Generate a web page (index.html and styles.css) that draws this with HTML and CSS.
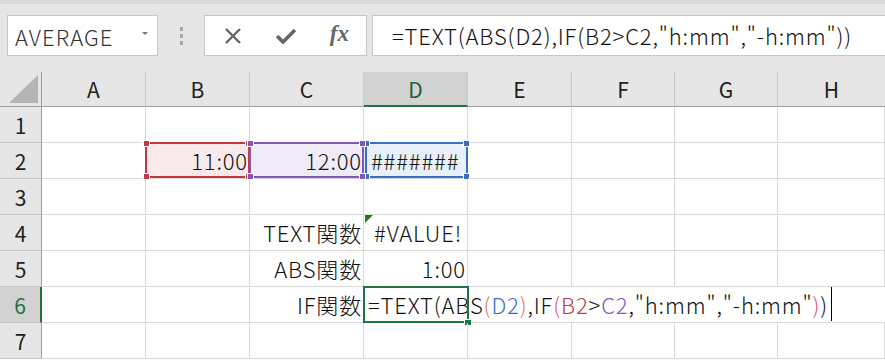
FILE: index.html
```html
<!DOCTYPE html>
<html lang="ja">
<head>
	<meta charset="UTF-8">
	<title>TEXT関数</title>
	<link rel="stylesheet" href="styles.css">
</head>
<body>
	<div class="toolbar">
		<div class="namebox">
			<span>AVERAGE</span>
			<span class="caret"></span>
		</div>
		<div class="grip"><i></i><i></i><i></i></div>
		<div class="btns">
			<svg width="18" height="16" viewBox="0 0 18 16"><path d="M2 1 L16 15 M16 1 L2 15" stroke="#666" stroke-width="2.4" fill="none"/></svg>
			<svg width="20" height="16" viewBox="0 0 20 16"><path d="M1 8 L7 14 L19 2" stroke="#666" stroke-width="3.6" fill="none"/></svg>
			<span class="fx">fx</span>
		</div>
		<div class="formula">=TEXT(ABS(D2),IF(B2&gt;C2,"h:mm","-h:mm"))</div>
	</div>

	<div class="sheet">
		<div class="hd corner"><svg width="29" height="28" viewBox="0 0 29 28"><path d="M29 0 L29 28 L0 28 Z" fill="#b4b4b4"/></svg></div>
		<div class="hd col">A</div>
		<div class="hd col">B</div>
		<div class="hd col">C</div>
		<div class="hd col sel">D</div>
		<div class="hd col">E</div>
		<div class="hd col">F</div>
		<div class="hd col">G</div>
		<div class="hd col last">H</div>

		<!-- 1 -->
		<div class="hd row">1</div>
		<div class="c"></div><div class="c"></div><div class="c"></div><div class="c"></div>
		<div class="c"></div><div class="c"></div><div class="c"></div><div class="c"></div>

		<!-- 2 -->
		<div class="hd row">2</div>
		<div class="c"></div>
		<div class="c r red-fill">11:00<div class="rng red"><i class="tl"></i><i class="tr"></i><i class="bl"></i><i class="br"></i></div></div>
		<div class="c r purple-fill">12:00<div class="rng purple"><i class="tl"></i><i class="tr"></i><i class="bl"></i><i class="br"></i></div></div>
		<div class="c blue-fill">#######<div class="rng blue"><i class="tl"></i><i class="tr"></i><i class="bl"></i><i class="br"></i></div></div>
		<div class="c"></div><div class="c"></div><div class="c"></div><div class="c"></div>

		<!-- 3 -->
		<div class="hd row">3</div>
		<div class="c"></div><div class="c"></div><div class="c"></div><div class="c"></div>
		<div class="c"></div><div class="c"></div><div class="c"></div><div class="c"></div>

		<!-- 4 -->
		<div class="hd row">4</div>
		<div class="c"></div><div class="c"></div>
		<div class="c r">TEXT関数</div>
		<div class="c ctr err">#VALUE!</div>
		<div class="c"></div><div class="c"></div><div class="c"></div><div class="c"></div>

		<!-- 5 -->
		<div class="hd row">5</div>
		<div class="c"></div><div class="c"></div>
		<div class="c r">ABS関数</div>
		<div class="c r">1:00</div>
		<div class="c"></div><div class="c"></div><div class="c"></div><div class="c"></div>

		<!-- 6 -->
		<div class="hd row sel">6</div>
		<div class="c"></div><div class="c"></div>
		<div class="c r">IF関数</div>
		<div class="c edit">=TEXT(ABS<span class="p1">(</span><span class="blue-t">D2</span><span class="p1">)</span>,IF<span class="p2">(</span><span class="red-t">B2</span>&gt;<span class="purple-t">C2</span>,"h:mm","-h:mm"<span class="p2">)</span>)<span class="cursor"></span><div class="active"></div></div>

		<!-- 7 -->
		<div class="hd row">7</div>
		<div class="c"></div><div class="c"></div><div class="c"></div><div class="c"></div>
		<div class="c"></div><div class="c"></div><div class="c"></div><div class="c"></div>
	</div>
</body>
</html>
```

FILE: styles.css
```css
* {
	padding: 0;
	margin: 0;
	box-sizing: border-box;
}
body {
	width: 885px;
	height: 360px;
	overflow: hidden;
	background: #fff;
	font-family: "Noto Sans CJK JP", "Noto Sans", sans-serif;
	font-weight: 300;
	color: #111;
}

/* formula bar */
.toolbar {
	height: 72px;
	background: #e6e6e6;
	border-top: 4px solid #d8d8d8;
	display: flex;
	align-items: flex-start;
	padding-top: 11px;
}
.namebox {
	margin-left: 7px;
	width: 151px;
	height: 41px;
	background: #fff;
	border: 1px solid #c6c6c6;
	display: flex;
	align-items: center;
	justify-content: space-between;
	padding: 0 9px 0 7px;
	font-size: 22px;
	letter-spacing: 1.1px;
	color: #333;
}
.caret {
	width: 0;
	height: 0;
	border-left: 3px solid transparent;
	border-right: 3px solid transparent;
	border-top: 3px solid #777;
	margin-bottom: 4px;
}
.grip {
	width: 46px;
	height: 41px;
	display: flex;
	flex-direction: column;
	align-items: center;
	justify-content: center;
	gap: 3px;
}
.grip i {
	display: block;
	width: 3px;
	height: 4px;
	background: #a8a8a8;
}
.btns {
	width: 163px;
	height: 41px;
	background: #fff;
	border: 1px solid #c6c6c6;
	display: flex;
	align-items: center;
	justify-content: space-between;
	padding: 0 17px 0 19px;
}
.fx {
	font-family: "Liberation Serif", serif;
	font-style: italic;
	font-weight: bold;
	font-size: 23px;
	color: #666;
	margin-top: -3px;
}
.formula {
	flex: 1;
	margin-left: 5px;
	height: 41px;
	background: #fff;
	border: 1px solid #c6c6c6;
	border-right: none;
	font-size: 22px;
	letter-spacing: 0.85px;
	line-height: 38px;
	padding-left: 19px;
	white-space: nowrap;
}

/* sheet grid */
.sheet {
	display: grid;
	grid-template-columns: 42px 104px 104px 114px 104px 104px 103px 103px 1fr;
	grid-template-rows: 35px repeat(7, 36px);
	font-size: 22px;
	letter-spacing: 0.85px;
}
.hd {
	background: #e6e6e6;
	color: #222;
	font-size: 21px;
	font-weight: 400;
	letter-spacing: 0;
	display: flex;
	align-items: center;
	justify-content: center;
}
.hd.col {
	border-right: 1px solid #c8c8c8;
	border-bottom: 1px solid #9e9e9e;
}
.hd.col.last {
	border-right: none;
}
.hd.corner {
	border-right: 1px solid #9e9e9e;
	border-bottom: 1px solid #9e9e9e;
	align-items: flex-end;
	justify-content: flex-end;
	padding: 0 3px 3px 0;
}
.hd.row {
	border-right: 1px solid #9e9e9e;
	border-bottom: 1px solid #c8c8c8;
}
.hd.col.sel {
	background: #d2d2d2;
	border-bottom: 2px solid #217346;
	color: #1d5e3c;
}
.hd.row.sel {
	background: #d2d2d2;
	border-right: 2px solid #217346;
	color: #217346;
}

.c {
	position: relative;
	border-right: 1px solid #d9d9d9;
	border-bottom: 1px solid #d9d9d9;
	line-height: 35px;
	padding: 0 3px;
	white-space: nowrap;
}
.c.r {
	text-align: right;
	padding-right: 1px;
}
.c.ctr {
	text-align: center;
	padding-left: 8px;
}
.err::before {
	content: "";
	position: absolute;
	left: 1px;
	top: 0;
	border-top: 8px solid #1e7b1e;
	border-right: 8px solid transparent;
}

.red-fill { background: #f8e9ea; }
.purple-fill { background: #efebf7; }
.blue-fill { background: #e9f0f9; padding-left: 7px; }

.rng {
	position: absolute;
	left: -1px;
	top: -1px;
	right: -1px;
	bottom: 0;
	border: 2px solid;
}
.rng.red { border-color: #c2393f; }
.rng.purple { border-color: #8157bb; z-index: 2; }
.rng.blue { border-color: #3a6ec6; left: 1px; }
.rng i {
	position: absolute;
	width: 7px;
	height: 7px;
	border: 1px solid #fff;
}
.rng.red i { background: #c2393f; }
.rng.purple i { background: #8157bb; }
.rng.blue i { background: #3a6ec6; }
.rng .tl { left: -4px; top: -4px; }
.rng .tr { right: -4px; top: -4px; }
.rng .bl { left: -4px; bottom: -4px; }
.rng .br { right: -4px; bottom: -4px; }

.edit {
	grid-column: 5 / -1;
	border-right: none;
	padding-left: 4px;
}
.active {
	position: absolute;
	left: -1px;
	top: -1px;
	width: 106px;
	height: 37px;
	border: 2px solid #217346;
}
.active::after {
	content: "";
	position: absolute;
	right: -4px;
	bottom: -4px;
	width: 6px;
	height: 5px;
	background: #217346;
	border-left: 1px solid #fff;
	border-top: 1px solid #fff;
}
.cursor {
	display: inline-block;
	width: 1px;
	height: 34px;
	background: #000;
	vertical-align: top;
	margin-left: 3px;
}
.p1 { color: #e0795e; }
.p2 { color: #d9577b; }
.blue-t { color: #3a6ec6; }
.red-t { color: #c2393f; }
.purple-t { color: #8157bb; }
```
